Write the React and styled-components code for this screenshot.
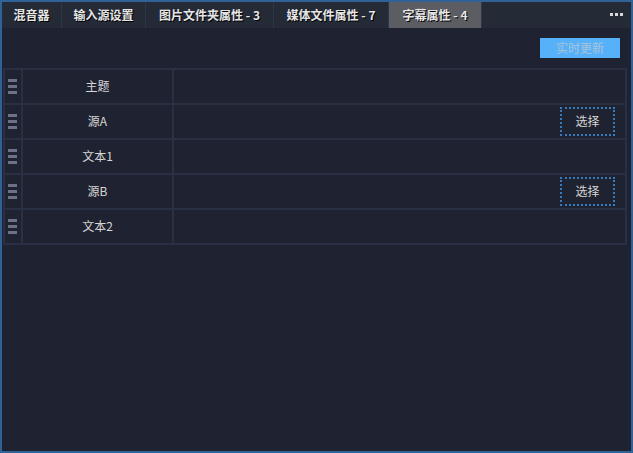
import styled, { createGlobalStyle } from "styled-components";

const Global = createGlobalStyle`
  html, body {
    margin: 0;
    padding: 0;
    background: #1f2230;
  }
  body {
    font-family: "Noto Sans CJK SC", "Noto Sans", sans-serif;
  }
`;

const tabs = [
  { label: "混音器", width: 60 },
  { label: "输入源设置", width: 84 },
  { label: "图片文件夹属性 - 3", width: 128 },
  { label: "媒体文件属性 - 7", width: 115 },
  { label: "字幕属性 - 4", width: 93, active: true },
];

const rows = [
  { name: "主题" },
  { name: "源A", pick: true },
  { name: "文本1" },
  { name: "源B", pick: true },
  { name: "文本2" },
];

const App = () => {
  return (
    <Window>
      <Global />
      <TabBar>
        {tabs.map((t) => (
          <Tab key={t.label} $w={t.width} $active={t.active}>
            {t.label}
          </Tab>
        ))}
        <More>
          <i />
          <i />
          <i />
        </More>
      </TabBar>
      <Body>
        <Toolbar>
          <UpdateButton>实时更新</UpdateButton>
        </Toolbar>
        <Table>
          {rows.map((r) => (
            <Row key={r.name}>
              <Handle>
                <Grip>
                  <span />
                  <span />
                  <span />
                </Grip>
              </Handle>
              <Label>{r.name}</Label>
              <Value>{r.pick && <PickButton>选择</PickButton>}</Value>
            </Row>
          ))}
        </Table>
      </Body>
    </Window>
  );
};

export default App;

const Window = styled.div`
  width: 633px;
  height: 453px;
  box-sizing: border-box;
  border: 2px solid #2f6397;
  display: flex;
  flex-direction: column;
  background: #1f2230;
  overflow: hidden;
`;

const TabBar = styled.div`
  height: 26px;
  display: flex;
  background: #252a37;
  flex-shrink: 0;
`;

const Tab = styled.div`
  width: ${(p) => p.$w}px;
  box-sizing: border-box;
  border-right: 1px solid #30364a;
  display: flex;
  align-items: center;
  justify-content: center;
  padding-bottom: 2px;
  font-size: 12px;
  font-weight: 700;
  color: #e6e6e6;
  text-shadow: 1px 1px 0 #000;
  white-space: nowrap;
  background: ${(p) => (p.$active ? "#5b5d62" : "transparent")};
`;

const More = styled.div`
  margin-left: auto;
  width: 30px;
  display: flex;
  align-items: center;
  justify-content: center;
  gap: 2px;
  padding-bottom: 2px;
  i {
    width: 3px;
    height: 3px;
    background: #d8d8d8;
  }
`;

const Body = styled.div`
  flex: 1;
  padding: 10px 4px 0 1px;
  display: flex;
  flex-direction: column;
`;

const Toolbar = styled.div`
  display: flex;
  justify-content: flex-end;
  padding-right: 7px;
  margin-bottom: 10px;
`;

const UpdateButton = styled.div`
  width: 80px;
  height: 20px;
  padding-bottom: 1px;
  box-sizing: border-box;
  background: #56b1f8;
  color: #a9c3da;
  font-size: 12px;
  display: flex;
  align-items: center;
  justify-content: center;
`;

const Table = styled.div`
  border: 2px solid #2a3043;
  border-bottom: none;
  display: flex;
  flex-direction: column;
`;

const Row = styled.div`
  display: grid;
  grid-template-columns: 18px 151px 1fr;
  height: 35px;
  box-sizing: border-box;
  border-bottom: 2px solid #2a3043;
`;

const Handle = styled.div`
  border-right: 2px solid #2a3043;
  display: flex;
  align-items: center;
  justify-content: center;
  padding-right: 2px;
`;

const Grip = styled.div`
  display: flex;
  flex-direction: column;
  gap: 3px;
  span {
    width: 9px;
    height: 3px;
    background: #6c7188;
  }
`;

const Label = styled.div`
  border-right: 2px solid #2a3043;
  display: flex;
  align-items: center;
  justify-content: center;
  padding-bottom: 3px;
  font-size: 12px;
  color: #d6d6d6;
`;

const Value = styled.div`
  display: flex;
  align-items: center;
  justify-content: flex-end;
  padding-right: 10px;
`;

const PickButton = styled.div`
  width: 55px;
  height: 29px;
  box-sizing: border-box;
  border: 2px dotted #3a7bbd;
  display: flex;
  align-items: center;
  justify-content: center;
  padding-bottom: 2px;
  font-size: 12px;
  color: #d6d6d6;
`;
